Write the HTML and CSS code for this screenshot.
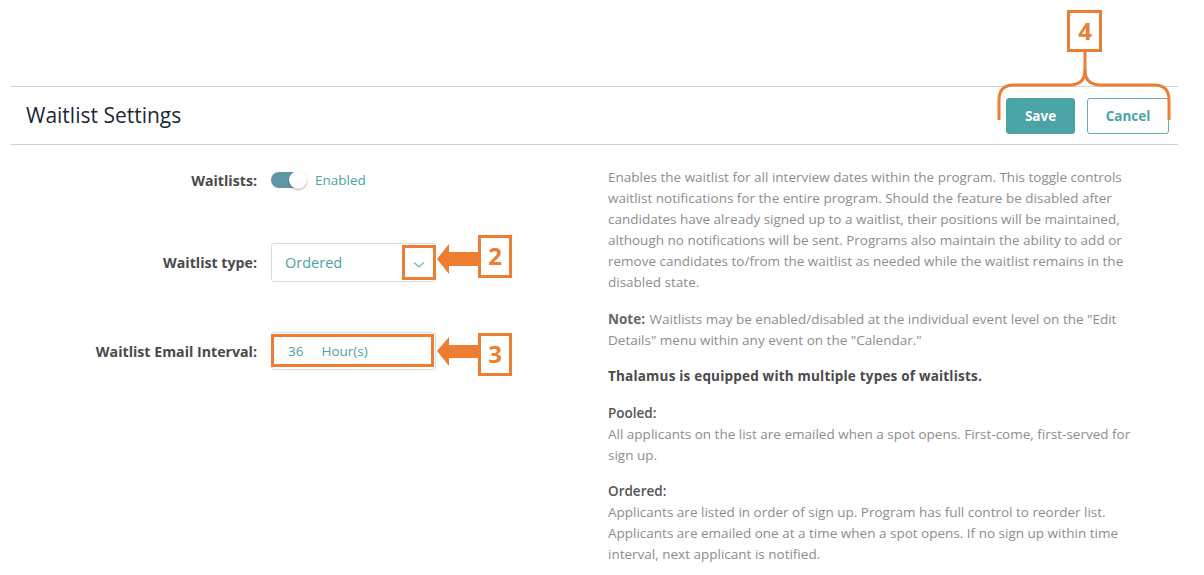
FILE: index.html
```html
<!DOCTYPE html>
<html>
<head>
<meta charset="utf-8">
<link rel="stylesheet" href="styles.css">
</head>
<body>
<div class="page">
  <div class="top-space"></div>
  <header class="header">
    <h1 class="title">Waitlist Settings</h1>
    <div class="actions">
      <button class="btn btn-save">Save</button>
      <button class="btn btn-cancel">Cancel</button>
    </div>
  </header>
  <main class="content">
    <section class="form">
      <div class="row row-toggle">
        <div class="label">Waitlists:</div>
        <div class="control">
          <span class="toggle"><span class="knob"></span></span>
          <span class="toggle-text">Enabled</span>
        </div>
      </div>
      <div class="row row-select">
        <div class="label">Waitlist type:</div>
        <div class="control">
          <div class="select">
            <span class="select-value">Ordered</span>
            <svg class="chevron" width="12" height="8" viewBox="0 0 12 8"><path d="M1 1.5 L6 6 L11 1.5" fill="none" stroke="#6cb8b8" stroke-width="1.2"/></svg>
          </div>
        </div>
      </div>
      <div class="row row-input">
        <div class="label">Waitlist Email Interval:</div>
        <div class="control">
          <div class="input">
            <span class="num">36</span>
            <span class="unit">Hour(s)</span>
          </div>
        </div>
      </div>
    </section>
    <section class="help">
      <p>Enables the waitlist for all interview dates within the program. This toggle controls waitlist notifications for the entire program. Should the feature be disabled after candidates have already signed up to a waitlist, their positions will be maintained, although no notifications will be sent. Programs also maintain the ability to add or remove candidates to/from the waitlist as needed while the waitlist remains in the disabled state.</p>
      <p><strong class="note">Note:</strong> Waitlists may be enabled/disabled at the individual event level on the "Edit Details" menu within any event on the "Calendar."</p>
      <p class="lead">Thalamus is equipped with multiple types of waitlists.</p>
      <p><span class="type">Pooled:</span><br>All applicants on the list are emailed when a spot opens. First-come, first-served for sign up.</p>
      <p><span class="type">Ordered:</span><br>Applicants are listed in order of sign up. Program has full control to reorder list. Applicants are emailed one at a time when a spot opens. If no sign up within time interval, next applicant is notified.</p>
    </section>
  </main>
  <svg class="annotations" width="1204" height="575" viewBox="0 0 1204 575">
    <g fill="none" stroke="#ed7d31" stroke-width="3">
      <rect x="1068.5" y="11.5" width="32" height="39"/>
      <path d="M1085 52 L1085 70 Q1085 84 1071 85 L1012 85 Q999 86 999 100 L999 120"/>
      <path d="M1085 70 Q1085 84 1099 85 L1156 85 Q1169 86 1169 100 L1169 120"/>
      <rect x="403.5" y="246.5" width="31" height="32"/>
      <rect x="479.5" y="236.5" width="31" height="40"/>
      <rect x="272.5" y="335.5" width="160" height="30"/>
      <rect x="479.5" y="334.5" width="31" height="40"/>
    </g>
    <g fill="#ed7d31">
      <polygon points="437,259 449,244 449,252 479,252 479,266 449,266 449,274"/>
      <polygon points="437,351 449,337 449,345 479,345 479,358 449,358 449,366"/>
    </g>
    <g class="ann-num" fill="#ed7d31">
      <text x="1085" y="40" text-anchor="middle">4</text>
      <text x="495" y="265" text-anchor="middle">2</text>
      <text x="495" y="363" text-anchor="middle">3</text>
    </g>
  </svg>
</div>
</body>
</html>
```

FILE: styles.css
```css
* { box-sizing: border-box; }
html, body { margin: 0; padding: 0; background: #fff; }
body { font-family: "Open Sans", Lato, sans-serif; }

.page { position: relative; width: 1204px; height: 575px; overflow: hidden; }
.top-space { height: 86px; }

.header {
  margin: 0 26px 0 11px;
  height: 59px;
  border-top: 1px solid #cfd2d8;
  border-bottom: 1px solid #cfd2d8;
  display: flex;
  align-items: center;
  justify-content: space-between;
  padding: 0 9px 0 15px;
}
.title {
  margin: 0 0 2px 0;
  font-size: 21px;
  font-weight: 400;
  color: #1c2839;
}
.actions { display: flex; gap: 12px; }
.btn {
  height: 36px;
  border-radius: 3px;
  font-family: "Open Sans", sans-serif;
  font-weight: 700;
  font-size: 13.5px;
  cursor: pointer;
}
.btn-save { width: 69px; background: #4aa3a4; border: 1px solid #4aa3a4; color: #fff; }
.btn-cancel { width: 82px; background: #fff; border: 1px solid #5fb0b0; color: #4aa3a4; }

.content { display: flex; padding-top: 22px; }
.form { width: 600px; display: flex; flex-direction: column; }
.row { display: flex; align-items: center; }
.label {
  width: 257px;
  text-align: right;
  font-weight: 700;
  font-size: 14.2px;
  color: #4a4a4a;
}
.control { margin-left: 14px; display: flex; align-items: center; }
.row-toggle { height: 26px; }
.row-select { margin-top: 50px; height: 39px; }
.row-input { margin-top: 50px; height: 38px; }

.toggle {
  position: relative;
  width: 35px;
  height: 16px;
  border-radius: 8px;
  background: #5e96a3;
  display: inline-block;
}
.knob {
  position: absolute;
  right: -1px;
  top: -1px;
  width: 18px;
  height: 18px;
  border-radius: 50%;
  background: #fff;
  box-shadow: 0 1px 2px rgba(0,0,0,0.35);
}
.toggle-text { margin-left: 9px; color: #4aa3a4; font-size: 13.5px; }

.select {
  width: 165px;
  height: 39px;
  border: 1px solid #d9dce1;
  border-radius: 3px;
  display: flex;
  align-items: center;
  justify-content: space-between;
  padding: 0 10px 0 13px;
}
.select-value { color: #4aa3a4; font-size: 14.5px; }
.chevron { margin-top: 4px; }

.input {
  width: 165px;
  height: 38px;
  border: 1px solid #d9dce1;
  border-radius: 3px;
  display: flex;
  align-items: center;
  padding-left: 16px;
  color: #4aa3a4;
  font-size: 13.5px;
}
.unit { margin-left: 18px; }

.help {
  margin-left: 8px;
  width: 535px;
  font-size: 13.5px;
  line-height: 21px;
  color: #8d8d8d;
}
.help p { margin: 0 0 15.5px 0; }
.note { color: #666; font-weight: 700; margin-right: 1px; }
.lead { color: #4a4a4a; font-weight: 700; letter-spacing: 0.2px; }
.type { color: #555; font-weight: 600; }

.annotations { position: absolute; left: 0; top: 0; pointer-events: none; }
.ann-num { font-family: "Open Sans", sans-serif; font-weight: 700; font-size: 24px; }
```
